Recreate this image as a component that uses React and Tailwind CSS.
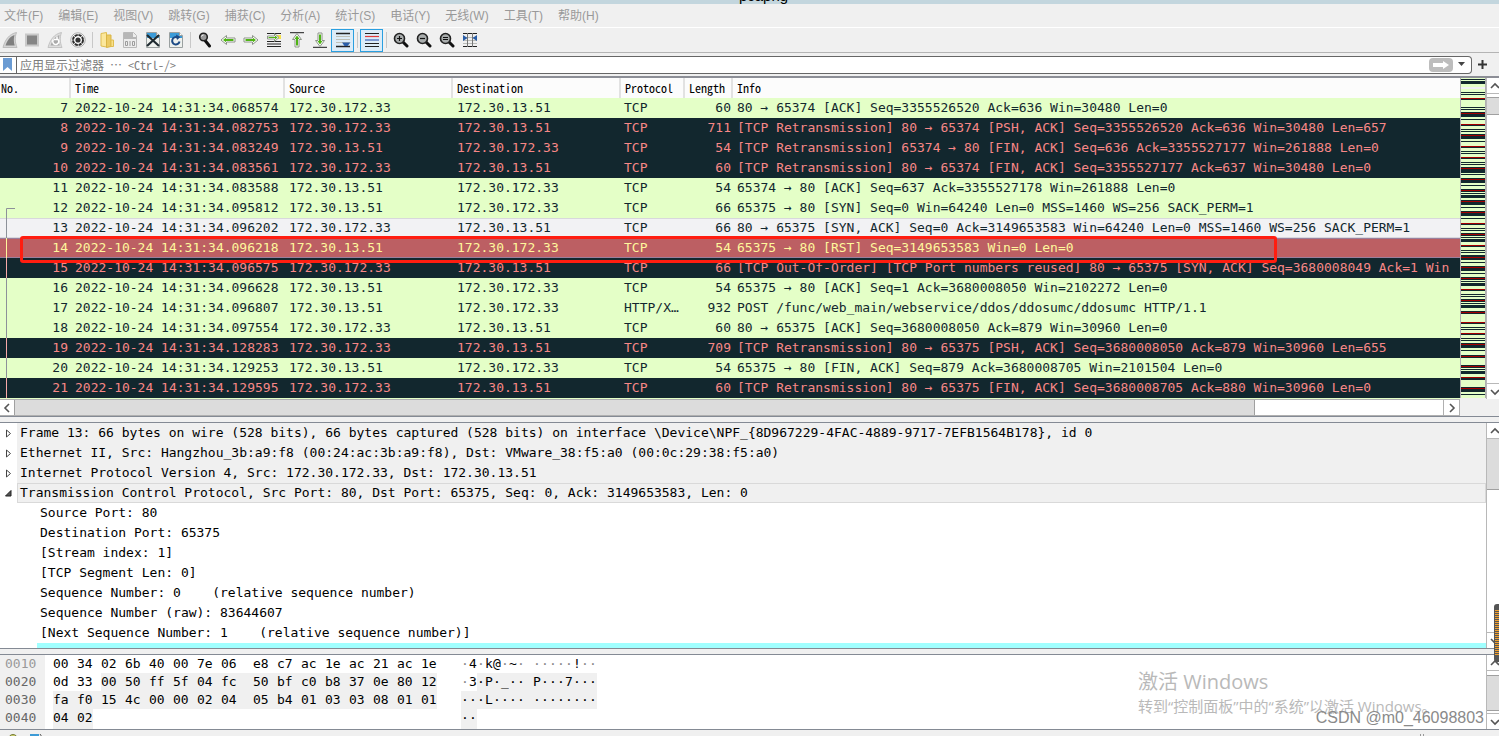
import React from 'react';

const A = '172.30.172.33';
const B = '172.30.13.51';

const packets = [
  [7, '068574', A, B, 'TCP', 60, '80 → 65374 [ACK] Seq=3355526520 Ack=636 Win=30480 Len=0', 'ok'],
  [8, '082753', A, B, 'TCP', 711, '[TCP Retransmission] 80 → 65374 [PSH, ACK] Seq=3355526520 Ack=636 Win=30480 Len=657', 'bad'],
  [9, '083249', B, A, 'TCP', 54, '[TCP Retransmission] 65374 → 80 [FIN, ACK] Seq=636 Ack=3355527177 Win=261888 Len=0', 'bad'],
  [10, '083561', A, B, 'TCP', 60, '[TCP Retransmission] 80 → 65374 [FIN, ACK] Seq=3355527177 Ack=637 Win=30480 Len=0', 'bad'],
  [11, '083588', B, A, 'TCP', 54, '65374 → 80 [ACK] Seq=637 Ack=3355527178 Win=261888 Len=0', 'ok'],
  [12, '095812', B, A, 'TCP', 66, '65375 → 80 [SYN] Seq=0 Win=64240 Len=0 MSS=1460 WS=256 SACK_PERM=1', 'ok'],
  [13, '096202', A, B, 'TCP', 66, '80 → 65375 [SYN, ACK] Seq=0 Ack=3149653583 Win=64240 Len=0 MSS=1460 WS=256 SACK_PERM=1', 'current'],
  [14, '096218', B, A, 'TCP', 54, '65375 → 80 [RST] Seq=3149653583 Win=0 Len=0', 'reset'],
  [15, '096575', A, B, 'TCP', 66, '[TCP Out-Of-Order] [TCP Port numbers reused] 80 → 65375 [SYN, ACK] Seq=3680008049 Ack=1 Win', 'bad'],
  [16, '096628', B, A, 'TCP', 54, '65375 → 80 [ACK] Seq=1 Ack=3680008050 Win=2102272 Len=0', 'ok'],
  [17, '096807', B, A, 'HTTP/X…', 932, 'POST /func/web_main/webservice/ddos/ddosumc/ddosumc HTTP/1.1', 'ok'],
  [18, '097554', A, B, 'TCP', 60, '80 → 65375 [ACK] Seq=3680008050 Ack=879 Win=30960 Len=0', 'ok'],
  [19, '128283', A, B, 'TCP', 709, '[TCP Retransmission] 80 → 65375 [PSH, ACK] Seq=3680008050 Ack=879 Win=30960 Len=655', 'bad'],
  [20, '129253', B, A, 'TCP', 54, '65375 → 80 [FIN, ACK] Seq=879 Ack=3680008705 Win=2101504 Len=0', 'ok'],
  [21, '129595', A, B, 'TCP', 60, '[TCP Retransmission] 80 → 65375 [FIN, ACK] Seq=3680008705 Ack=880 Win=30960 Len=0', 'bad'],
];

const rowStyle = {
  ok: 'bg-[#e4ffc7] text-[#12272e]',
  bad: 'bg-[#12272e] text-[#f78787]',
  current: 'bg-[#f2f2f4] text-[#12272e] shadow-[inset_0_1px_0_#d8d8dc,inset_0_-1px_0_#d8d8dc]',
  reset: 'bg-[#bc5f63] text-[#fff79c] shadow-[inset_0_1px_0_#9a7f9c,inset_0_-1px_0_#9a7f9c]',
};
const lineColor = { ok: '#8d9199', current: '#8d9199', bad: '#f7a9a9', reset: '#fff79c' };

const details = [
  { t: 'Frame 13: 66 bytes on wire (528 bits), 66 bytes captured (528 bits) on interface \\Device\\NPF_{8D967229-4FAC-4889-9717-7EFB1564B178}, id 0', top: true },
  { t: 'Ethernet II, Src: Hangzhou_3b:a9:f8 (00:24:ac:3b:a9:f8), Dst: VMware_38:f5:a0 (00:0c:29:38:f5:a0)', top: true },
  { t: 'Internet Protocol Version 4, Src: 172.30.172.33, Dst: 172.30.13.51', top: true },
  { t: 'Transmission Control Protocol, Src Port: 80, Dst Port: 65375, Seq: 0, Ack: 3149653583, Len: 0', top: true, open: true },
  { t: 'Source Port: 80' },
  { t: 'Destination Port: 65375' },
  { t: '[Stream index: 1]' },
  { t: '[TCP Segment Len: 0]' },
  { t: 'Sequence Number: 0    (relative sequence number)' },
  { t: 'Sequence Number (raw): 83644607' },
  { t: '[Next Sequence Number: 1    (relative sequence number)]' },
];

// Address, bytes, characters, index of the first byte of the selected protocol.
const hexRows = [
  ['0010', '00 34 02 6b 40 00 7e 06 e8 c7 ac 1e ac 21 ac 1e', '·4·k@·~· ·····!··', 16],
  ['0020', '0d 33 00 50 ff 5f 04 fc 50 bf c0 b8 37 0e 80 12', '·3·P·_·· P···7···', 2],
  ['0030', 'fa f0 15 4c 00 00 02 04 05 b4 01 03 03 08 01 01', '···L···· ········', 0],
  ['0040', '04 02', '··', 0],
];

// Overview strip: [first line, height] of dark bands, then single red lines.
const darkBands = [[1, 1], [3, 3], [14, 1], [16, 1], [20, 2], [29, 1], [31, 1], [34, 5], [41, 1], [46, 2], [51, 1], [53, 1], [56, 5], [63, 1], [68, 2], [73, 1], [75, 1], [79, 2], [84, 1], [86, 1], [89, 6], [96, 1], [100, 5], [107, 1], [111, 3], [115, 1], [117, 3], [122, 5], [129, 1], [133, 5], [140, 1], [145, 2], [150, 1], [152, 1], [155, 3], [159, 1], [161, 3], [167, 2], [172, 1], [174, 1], [177, 5], [184, 1], [188, 5], [195, 1], [199, 3], [203, 1], [205, 3], [211, 2], [216, 1], [218, 1], [221, 3], [225, 1], [227, 3], [233, 3], [244, 2], [249, 1], [251, 1], [255, 2], [260, 1], [262, 1], [265, 5], [272, 1], [277, 3], [287, 3], [291, 1], [293, 3], [299, 3], [309, 5], [316, 1]];
const redLines = [20, 35, 46, 57, 68, 79, 90, 101, 112, 123, 134, 145, 156, 167, 179, 189, 200, 211, 222, 234, 244, 255, 266, 278, 288, 299, 310];

const menus = ['文件(F)', '编辑(E)', '视图(V)', '跳转(G)', '捕获(C)', '分析(A)', '统计(S)', '电话(Y)', '无线(W)', '工具(T)', '帮助(H)'];

const Icon = ({ children }) => (
  <svg width="16" height="16" viewBox="0 0 16 16" fill="none">{children}</svg>
);
const Doc = ({ top = '#3b9bd8' }) => (
  <>
    <path d="M1.5.5h10l3 3v12h-13z" fill="#eef1ee" stroke="#9aa0a0" />
    <path d="M2 1h9.500v3H14v2H2z" fill={top} />
    <path d="M11.500.5v3h3" fill="#fff" stroke="#9aa0a0" />
  </>
);
const Lens = ({ children }) => (
  <>
    <path d="M9.500 9.500l4.500 4.500" stroke="#111" strokeWidth="3" strokeLinecap="round" />
    <circle cx="6.500" cy="6.500" r="5" fill="#a9adad" stroke="#222" strokeWidth="1.600" />
    {children}
  </>
);

const tools = [
  ['Start', <Icon><path d="M1 15.500C3 8 7 2 14.500.5c-2 5-1.500 10 .5 15z" fill="#d5d5d5" stroke="#bdbdbd" /><path d="M3.500 13.500C5.500 8 8 4.500 12.500 3c-1 4-.8 7 .2 10.500z" fill="#7f7f7f" /></Icon>],
  ['Stop', <Icon><path d="M1 1.500h14v13H1z" fill="#c9c9c9" /><path d="M3 3.500h10v9H3z" fill="#858585" /></Icon>],
  ['Restart', <Icon><path d="M1 15.500C3 8 7 2 14.500.5c-2 5-1.500 10 .5 15z" fill="#ddd" stroke="#c3c3c3" /><path d="M3.500 13.500C5.500 8 8 4.500 12.500 3c-1 4-.8 7 .2 10.500z" fill="#a9a9a9" /><path d="M6.500 7.500a3 3 0 1 0 4-.5M10 4.500v3h-3" stroke="#fff" strokeWidth="1.500" /></Icon>],
  ['Options', <Icon><circle cx="8" cy="8" r="7.200" fill="#fff" stroke="#aaa" /><circle cx="8" cy="8" r="5" stroke="#2d2d2d" strokeWidth="2" strokeDasharray="3.200 .7" /><circle cx="8" cy="8" r="2.600" fill="#333" /></Icon>],
  null,
  ['Open', <Icon><path d="M2 1.500L7.500.5V15L2 14z" fill="#fbe79c" stroke="#dfbd50" /><path d="M7.500 3H12v11.500l-4.500 1z" fill="#ecca62" stroke="#d9b545" /><path d="M12 8h2.500v6.500H12z" fill="#f9e08a" stroke="#dfbd50" /></Icon>],
  ['Save', <Icon><path d="M1.500.5h10l3 3v12h-13z" fill="#ededed" stroke="#bababa" /><path d="M2 1h9v4h3v2H2z" fill="#b7b7b7" /><path d="M3.500 9.500h2v4h-2zM8 9v5M10.500 9.500h2v4h-2z" stroke="#9c9c9c" /></Icon>],
  ['Close', <Icon><Doc /><path d="M2 3l12 11M14 3L2 14" stroke="#1f2a30" strokeWidth="2.200" /></Icon>],
  ['Reload', <Icon><Doc /><path d="M11.500 9.500a3.700 3.700 0 1 1-2-4" stroke="#1c4a86" strokeWidth="2" /><path d="M8 2.500l4.500 2.500L9 8z" fill="#1c4a86" /></Icon>],
  null,
  ['Find', <Icon><path d="M8.500 9l4 5" stroke="#111" strokeWidth="3" strokeLinecap="round" /><circle cx="6.500" cy="5" r="3.800" fill="#9a9a9a" stroke="#222" strokeWidth="1.600" /><path d="M4.500 4.500a2 2 0 0 1 2-1.500" stroke="#fff" /></Icon>],
  ['Back', <Icon><path d="M1 8l5.500-4.500V6H15v4H6.500v2.500z" fill="#fff" stroke="#8d9489" /><path d="M3 8l3-2.200V7h7.500v2H6v1.200z" fill="#4fb414" /></Icon>],
  ['Forward', <Icon><path d="M15 8L9.500 3.500V6H1v4h8.500v2.500z" fill="#fff" stroke="#8d9489" /><path d="M13 8l-3-2.200V7H2.500v2H10v1.200z" fill="#4fb414" /></Icon>],
  ['Go to', <Icon><path d="M9 3h6v4H9z" fill="#f6e04a" /><path d="M1 1.500h14M1 9.500h14M1 12h14M1 14.500h14" stroke="#222" strokeWidth="1.200" /><path d="M13 5.500L8.500 1.500V4h-7v3h7v2.500z" fill="#fff" stroke="#8d9489" /><path d="M11.500 5.500L9 3.600V5H2.500v1H9v1.400z" fill="#4fb414" /></Icon>],
  ['First', <Icon><path d="M1 .5h14" stroke="#444" strokeWidth="1.500" /><path d="M8 1.500L3.500 7.500H6V15h4V7.500h2.500z" fill="#fff" stroke="#8d9489" /><path d="M8 3.500L5.500 7H7v6.500h2V7h1.500z" fill="#4fb414" /></Icon>],
  ['Last', <Icon><path d="M1 15.500h14" stroke="#444" strokeWidth="1.500" /><path d="M8 14.500L3.500 8.500H6V1h4v7.500h2.500z" fill="#fff" stroke="#8d9489" /><path d="M8 12.500L5.500 9H7V2.500h2V9h1.500z" fill="#4fb414" /></Icon>],
  ['Auto scroll', <Icon><path d="M1 1.500h14M1 14.500h14" stroke="#222" strokeWidth="1.500" /><path d="M1 4.500h14M1 7.500h14M1 10.500h14" stroke="#bfc0b6" /><path d="M7 10.500h8.500L12.500 14H9.500z" fill="#2a5ea8" /></Icon>, true],
  null,
  ['Colorize', <Icon><path d="M1 1.500h14M1 11.500h14M1 14.500h14" stroke="#222" strokeWidth="1.200" /><path d="M1 4.500h14" stroke="#e03a3a" strokeWidth="1.200" /><path d="M1 8h14" stroke="#3c62b8" strokeWidth="1.200" /></Icon>, true],
  null,
  ['Zoom in', <Icon><Lens><path d="M4 6.500h5M6.500 4v5" stroke="#111" strokeWidth="1.200" /></Lens></Icon>],
  ['Zoom out', <Icon><Lens><path d="M4 6.500h5" stroke="#111" strokeWidth="1.200" /></Lens></Icon>],
  ['Normal size', <Icon><Lens><path d="M4 5.500h5M4 7.500h5" stroke="#111" /></Lens></Icon>],
  ['Resize columns', <Icon><path d="M1 1.500h14M1 14.500h14" stroke="#222" strokeWidth="1.200" /><path d="M1 5.500h14M1 8.500h14M1 11.500h14" stroke="#b9bbb8" /><path d="M5.500 1v14M10.500 1v14" stroke="#777" /><path d="M1 3l4.500 3L1 9zM15 3l-4.500 3L15 9z" fill="#2a5ea8" /></Icon>],
];

const chev = { up: 'M1 6l4-4 4 4', down: 'M1 2l4 4 4-4', left: 'M6 1L2 5l4 4', right: 'M2 1l4 4-4 4' };
function Chevron({ dir }) {
  const horizontal = dir === 'left' || dir === 'right';
  return (
    <svg width={horizontal ? 8 : 10} height={horizontal ? 10 : 8} className="shrink-0" fill="none">
      <path d={chev[dir]} stroke="#555" strokeWidth="1.600" />
    </svg>
  );
}

function VScroll({ children }) {
  return (
    <div className="flex w-[13px] shrink-0 flex-col overflow-hidden border-l border-[#b8b8b8] bg-white">
      <button aria-label="Scroll up" className="flex h-4 shrink-0 items-center justify-center border-b border-[#b8b8b8] pl-1"><Chevron dir="up" /></button>
      {children}
      <button aria-label="Scroll down" className="mt-auto flex h-4 shrink-0 items-center justify-center border-t border-[#b8b8b8] pl-1"><Chevron dir="down" /></button>
    </div>
  );
}

function Th({ children, className = 'pl-1' }) {
  return <th className={`overflow-hidden border-r-2 border-[#e2e2e2] text-left font-normal ${className}`}>{children}</th>;
}

function Packet({ row }) {
  const [no, time, src, dst, proto, len, info, kind] = row;
  return (
    <tr className={`h-5 ${rowStyle[kind]}`}>
      <td>
        <div className="flex h-5 items-center justify-between pr-[3px]">
          <svg width="16" height="20" fill="none">
            {no === 12 && <path d="M15 10.500H6.500V20" stroke={lineColor[kind]} />}
            {no > 12 && <path d="M6.500 0V20" stroke={lineColor[kind]} />}
          </svg>
          {no}
        </div>
      </td>
      <td className="pl-1">2022-10-24 14:31:34.{time}</td>
      <td className="pl-1">{src}</td>
      <td className="pl-1">{dst}</td>
      <td className="pl-[3px]">{proto}</td>
      <td className="pr-0.5 text-right">{len}</td>
      <td className="overflow-hidden pl-1">{info}</td>
    </tr>
  );
}

function HexRow({ row, last }) {
  const [addr, bytes, chars, hot] = row;
  const list = bytes.split(' ');
  const hotChar = hot > 7 ? hot + 1 : hot;
  return (
    <div className={`flex ${last ? 'h-5' : 'h-[18px]'}`}>
      <span className={`w-[45px] bg-[#f0f0f0] pl-[5px] ${addr === '0010' ? 'text-[#999]' : 'text-[#666]'}`}>{addr}</span>
      <span className="flex w-[416px] pl-2">
        {list.map((b, i) => (
          <span key={i} className={`${i === list.length - 1 ? 'w-4' : i === 7 ? 'w-8' : 'w-6'} ${i >= hot ? 'bg-[#f0f0f0]' : ''}`}>{b}</span>
        ))}
      </span>
      <span className="flex">
        {chars.split('').map((c, i) => (
          <span key={i} className={`w-2 ${i >= hotChar ? 'bg-[#f0f0f0]' : c === '·' ? 'text-[#888]' : ''}`}>{c}</span>
        ))}
      </span>
    </div>
  );
}

export default function App() {
  return (
    <div className="relative flex h-screen w-full flex-col overflow-hidden bg-[#f0f0f0] font-['Liberation_Sans','Noto_Sans_CJK_SC',sans-serif] text-black">
      <header className="flex h-1 shrink-0 items-end justify-center overflow-hidden bg-[#c3d6de] pb-px pl-7 text-[15px] leading-none">
        <span>pcapng</span>
      </header>
      <nav className="flex h-6 shrink-0 items-center gap-[15px] border-b border-white pl-1 text-[12px] text-[#999]">
        {menus.map((m) => <button key={m} className="whitespace-nowrap">{m}</button>)}
      </nav>
      <div className="flex h-[25px] shrink-0 items-center border-b border-[#b4b4b4]">
        {tools.map((t, i) =>
          t ? (
            <button key={i} aria-label={t[0]} className={`flex h-[23px] shrink-0 items-center justify-center ${i === 0 ? 'w-5' : 'w-[23px]'} ${t[2] ? 'border border-[#2a9fe0] bg-[#dcecf8]' : ''}`}>{t[1]}</button>
          ) : (
            <span key={i} className="ml-[3px] mr-0.5 h-4 w-px shrink-0 bg-[#c8c8c8]" />
          )
        )}
      </div>
      <div className="flex h-[25px] shrink-0 items-center border-b-2 border-[#8c8e96] pr-3">
        <div className="flex h-[18px] flex-1 items-center rounded-r border border-l-0 border-[#666] bg-white">
          <button aria-label="Bookmarks" className="flex h-full w-[17px] items-center justify-center border-r border-[#666] pr-0.5">
            <svg width="9" height="13"><path d="M0 0h9v13L4.500 9 0 13z" fill="#6a9bd3" /></svg>
          </button>
          <input
            aria-label="Display filter"
            placeholder="应用显示过滤器 … <Ctrl-/>"
            className="h-4 min-w-0 flex-1 bg-transparent pl-[3px] font-['Noto_Sans_Mono_CJK_SC','Liberation_Mono',monospace] text-[12px] outline-none placeholder:text-[#7c7c7c]"
          />
          <button aria-label="Apply" className="flex h-3.5 w-6 items-center justify-center rounded-sm bg-[#bdbdbd]">
            <svg width="16" height="8"><path d="M0 2h10V0l6 4-6 4V6H0z" fill="#fff" /></svg>
          </button>
          <button aria-label="Recent filters" className="flex w-[18px] items-center justify-center">
            <svg width="8" height="5"><path d="M0 0h7L3.500 4z" fill="#444" /></svg>
          </button>
        </div>
        <button aria-label="Add filter" className="ml-1.5">
          <svg width="9" height="9"><path d="M4.500 0v9M0 4.500h9" stroke="#333" strokeWidth="2" /></svg>
        </button>
      </div>

      <section className="flex shrink-0">
        <div className="min-w-0 flex-1">
          <div className="relative overflow-hidden bg-[#e4ffc7] pb-px">
            <table className="w-full table-fixed border-separate border-spacing-0 whitespace-pre font-['DejaVu_Sans_Mono',monospace] text-[13px] leading-5">
              <colgroup>
                <col className="w-[71px]" /><col className="w-[214px]" /><col className="w-[168px]" /><col className="w-[168px]" /><col className="w-16" /><col className="w-12" /><col />
              </colgroup>
              <thead className="bg-[#fcfcfc] font-['Noto_Sans_Mono_CJK_SC','Liberation_Mono',monospace] text-[12px]">
                <tr className="h-5">
                  <Th className="pl-px">No.</Th><Th>Time</Th><Th>Source</Th><Th>Destination</Th><Th>Protocol</Th><Th>Length</Th>
                  <th className="pl-1 text-left font-normal">Info</th>
                </tr>
              </thead>
              <tbody>{packets.map((p) => <Packet key={p[0]} row={p} />)}</tbody>
            </table>
            <div className="pointer-events-none absolute left-5 top-[158px] h-[27px] w-[1257px] rounded-[3px] border-3 border-[#ff1d10]" />
          </div>
          <div className="flex h-[17px] border-y border-[#b0b0b0] bg-white">
            <button aria-label="Scroll left" className="flex w-[14px] items-center justify-center"><Chevron dir="left" /></button>
            <div className="w-[85%] border-x border-[#a0a0a0] bg-[#dcdcdc]" />
            <button aria-label="Scroll right" className="ml-auto flex w-[17px] items-center justify-center border-x border-[#b0b0b0]"><Chevron dir="right" /></button>
          </div>
        </div>
        <div className="mb-[17px] flex">
          <svg width="26" height="320" shapeRendering="crispEdges" className="border-x border-[#b0b0b0] bg-[#e4ffc7]">
            <rect y="9" width="24" height="2" fill="#f0f0f4" />
            {darkBands.map(([y, h]) => <rect key={y} y={y} width="24" height={h} fill="#12272e" />)}
            {redLines.map((y) => <rect key={y} y={y} width="24" height="1" fill="#a40000" />)}
          </svg>
          <VScroll><div className="mt-[3px] h-[18px] border-y border-[#a0a0a0] bg-[#dcdcdc]" /></VScroll>
        </div>
      </section>

      <div className="h-[7px] shrink-0 border-y border-[#848a94]" />

      <section className="flex min-h-0 flex-1">
        <div className="min-w-0 flex-1 overflow-hidden whitespace-pre bg-white font-['DejaVu_Sans_Mono',monospace] text-[13px] leading-5">
          {details.map((d) =>
            d.top ? (
              <div key={d.t} className="flex h-5">
                <button aria-label="Toggle" className="flex w-[17px] shrink-0 items-center justify-center">
                  <svg width="7" height="9" fill="none">
                    {d.open ? <path d="M.5 7L6 1.500V7z" fill="#555" stroke="#222" /> : <path d="M1.500 1v7L5.500 4.500z" stroke="#444" />}
                  </svg>
                </button>
                <div className={`min-w-0 flex-1 overflow-hidden bg-[#f0f0f0] ${d.open ? 'border border-[#d9d9d9] pl-0.5 leading-[18px]' : 'pl-[3px]'}`}>{d.t}</div>
              </div>
            ) : (
              <div key={d.t} className="h-5 pl-10">{d.t}</div>
            )
          )}
          <div className="ml-[37px] h-5 bg-[#a0ffff]" />
        </div>
        <VScroll><div className="h-[51px] shrink-0 border-b border-[#a0a0a0] bg-[#dcdcdc]" /></VScroll>
      </section>

      <div className="h-[7px] shrink-0 border-y border-[#848a94]" />

      <section className="flex shrink-0 border-b border-[#848a94] bg-white">
        <div className="min-w-0 flex-1 whitespace-pre font-['DejaVu_Sans_Mono',monospace] text-[13px] leading-[18px]">
          {hexRows.map((r, i) => <HexRow key={r[0]} row={r} last={i === hexRows.length - 1} />)}
        </div>
        <VScroll><div className="mt-1 h-9 border-y border-[#a0a0a0] bg-[#dcdcdc]" /></VScroll>
      </section>

      <footer className="flex h-1.5 shrink-0 items-start gap-3 overflow-hidden pl-2">
        <svg width="10" height="6" className="mt-1"><circle cx="5" cy="5" r="4.500" fill="#c9cf6a" stroke="#777a3a" /></svg>
        <svg width="13" height="6" className="mt-1"><path d="M0 0h9v6H0z" fill="#3d9bd6" /><path d="M10 0l2 3" stroke="#555" /></svg>
        <svg width="6" height="6" className="ml-auto mr-[74px] mt-1"><path d="M1.500 0v6M4.500 0v6" stroke="#999" /></svg>
      </footer>

      <div className="pointer-events-none absolute bottom-[18px] right-[60px] w-[301px] whitespace-nowrap font-['Open_Sans','Noto_Sans_CJK_SC',sans-serif] text-[#b9b9b9]">
        <p className="text-[20px] leading-6">激活 Windows</p>
        <p className="text-[15px] leading-6">转到“控制面板”中的“系统”以激活 Windows。</p>
      </div>
      <div className="pointer-events-none absolute bottom-2 right-[15px] text-[16px] leading-5 text-[#8a8a8a]">CSDN @m0_46098803</div>
      <svg width="5" height="58" className="pointer-events-none absolute bottom-[74px] right-0">
        <rect width="10" height="58" rx="3" fill="#555" />
        {Array.from({ length: 23 }, (_, i) => <rect key={i} x="1" y={6 + i * 2} width="4" height="1" fill="#f0a030" />)}
      </svg>
    </div>
  );
}
